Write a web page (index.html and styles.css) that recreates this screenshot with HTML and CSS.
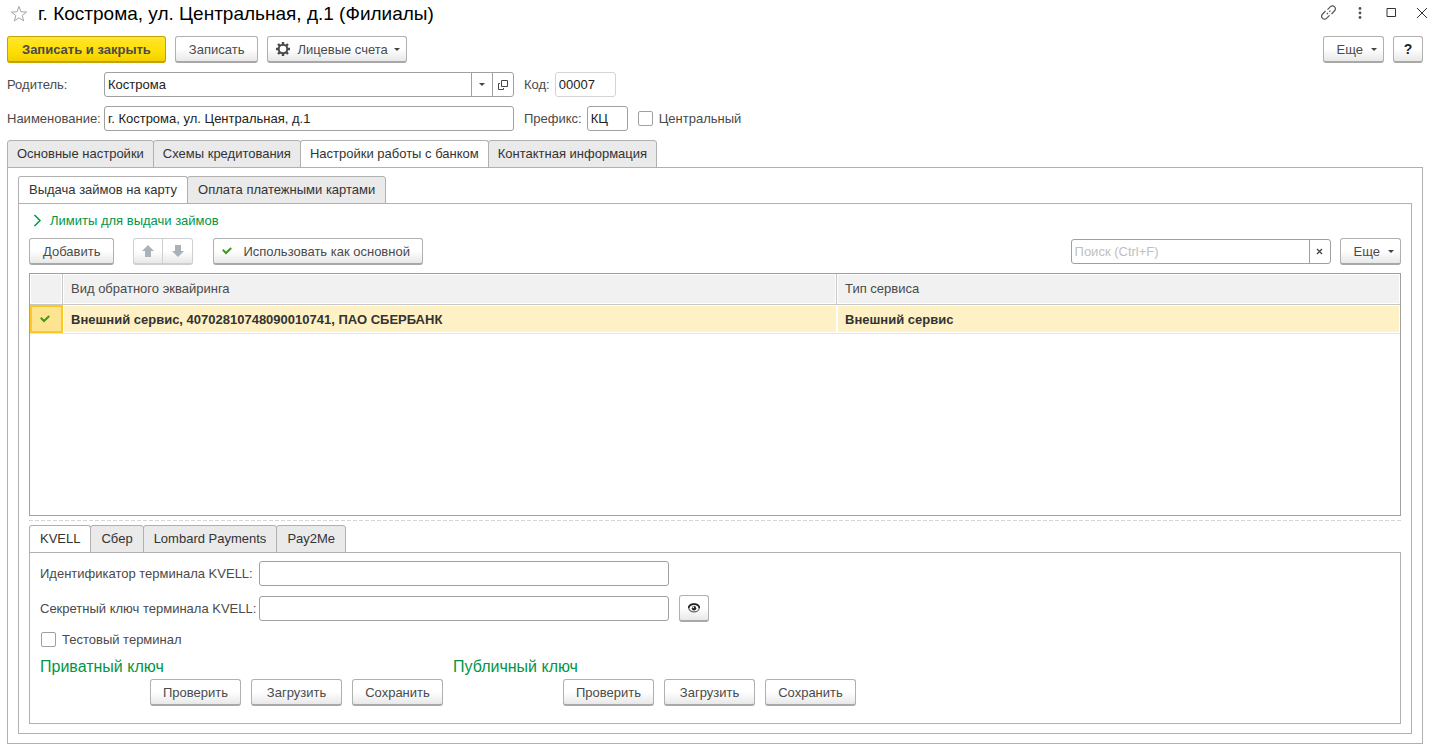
FILE: index.html
```html
<!DOCTYPE html>
<html lang="ru">
<head>
<meta charset="utf-8">
<title>г. Кострома, ул. Центральная, д.1 (Филиалы)</title>
<link rel="stylesheet" href="styles.css">
</head>
<body>
<header class="titlebar">
  <button class="icon-btn star" aria-label="В избранное"><svg width="18" height="18" viewBox="0 0 18 18"><path d="M9 1.500l2 5.300 5.600.2-4.400 3.500 1.500 5.400L9 12.800l-4.700 3.100 1.500-5.400L1.400 7l5.600-.2z" fill="none" stroke="#a5a5a5"/></svg></button>
  <h1 class="title">г. Кострома, ул. Центральная, д.1 (Филиалы)</h1>
  <div class="window-tools">
    <button class="icon-btn" aria-label="Ссылка"><svg width="16" height="16" viewBox="0 0 16 16" fill="none" stroke="#555" stroke-width="1.200"><path d="M6.500 4.700l3-3a2.700 2.700 0 0 1 3.900 0l.2.200a2.700 2.700 0 0 1 0 3.900L10.500 9M8.500 10.300l-3 3a2.700 2.700 0 0 1-3.900 0l-.2-.2a2.700 2.700 0 0 1 0-3.900L4.500 6M5.800 9.200l1.200-1.200M8.200 6.800l1.200-1.200"/></svg></button>
    <button class="icon-btn" aria-label="Меню"><svg width="16" height="16" viewBox="0 0 16 16" fill="#555"><circle cx="8" cy="3.500" r="1.400"/><circle cx="8" cy="8" r="1.400"/><circle cx="8" cy="12.500" r="1.400"/></svg></button>
    <button class="icon-btn" aria-label="Развернуть"><svg width="16" height="16" viewBox="0 0 16 16"><path d="M4 3.500h8.500v8H4z" fill="none" stroke="#333"/></svg></button>
    <button class="icon-btn" aria-label="Закрыть"><svg width="16" height="16" viewBox="0 0 16 16"><path d="M3 3l10 10M13 3L3 13" fill="none" stroke="#333"/></svg></button>
  </div>
</header>

<div class="toolbar">
  <button class="btn primary">Записать и закрыть</button>
  <button class="btn">Записать</button>
  <button class="btn menu with-icon"><svg width="16" height="16" viewBox="0 0 16 16"><circle cx="8" cy="8" r="4.300" fill="none" stroke="#4a4a4a" stroke-width="2"/><path d="M8 1v2.500M8 12.500V15M1 8h2.500M12.500 8H15M3 3l1.900 1.900M11.100 11.100L13 13M3 13l1.900-1.900M11.100 4.900L13 3" stroke="#4a4a4a" stroke-width="2.400"/></svg>Лицевые счета<span class="caret"></span></button>
  <span class="spacer"></span>
  <button class="btn menu">Еще<span class="caret"></span></button>
  <button class="btn help" aria-label="Справка">?</button>
</div>

<div class="field-row">
  <label class="main-label" for="parent">Родитель:</label>
  <div class="combo wide">
    <input id="parent" class="combo-input" type="text" value="Кострома">
    <button class="combo-btn" aria-label="Выбрать"><span class="caret"></span></button>
    <button class="combo-btn" aria-label="Открыть"><svg width="10" height="10" viewBox="0 0 10 10" fill="none" stroke="#444"><path d="M3.500.5h6v6h-6zM2 3.500H.5v6h5V8"/></svg></button>
  </div>
  <label for="code">Код:</label>
  <input id="code" class="input code" type="text" value="00007" readonly>
</div>
<div class="field-row">
  <label class="main-label" for="name">Наименование:</label>
  <input id="name" class="input wide" type="text" value="г. Кострома, ул. Центральная, д.1">
  <label for="prefix">Префикс:</label>
  <input id="prefix" class="input prefix" type="text" value="КЦ">
  <label class="check-label"><input class="check" type="checkbox">Центральный</label>
</div>

<nav class="tabs main-tabs">
  <button class="tab">Основные настройки</button>
  <button class="tab">Схемы кредитования</button>
  <button class="tab active">Настройки работы с банком</button>
  <button class="tab">Контактная информация</button>
</nav>
<main class="panel outer">
  <nav class="tabs">
    <button class="tab active">Выдача займов на карту</button>
    <button class="tab">Оплата платежными картами</button>
  </nav>
  <section class="panel inner">
    <a class="limits" href="#"><svg width="9" height="13" viewBox="0 0 9 13"><path d="M1.500 1l5.500 5.500L1.500 12" fill="none" stroke="#009646" stroke-width="1.500"/></svg>Лимиты для выдачи займов</a>
    <div class="commands">
      <button class="btn">Добавить</button>
      <div class="pair">
        <button class="btn" disabled aria-label="Вверх"><svg width="12" height="12" viewBox="0 0 12 12"><path d="M6 0l6 6H9v6H3V6H0z" fill="#a9b2b8"/></svg></button>
        <button class="btn" disabled aria-label="Вниз"><svg width="12" height="12" viewBox="0 0 12 12"><path d="M6 12l6-6H9V0H3v6H0z" fill="#a9b2b8"/></svg></button>
      </div>
      <button class="btn use"><svg width="10" height="8" viewBox="0 0 10 8"><path d="M.8 2.800l3.200 3.200L9.200 1" fill="none" stroke="#3d9a1c" stroke-width="2"/></svg>Использовать как основной</button>
      <span class="spacer"></span>
      <div class="combo search">
        <input class="combo-input" type="text" placeholder="Поиск (Ctrl+F)" aria-label="Поиск">
        <button class="combo-btn" aria-label="Очистить"><svg width="7" height="7" viewBox="0 0 7 7"><path d="M1 1l5 5M6 1L1 6" stroke="#444" stroke-width="1.200"/></svg></button>
      </div>
      <button class="btn menu">Еще<span class="caret"></span></button>
    </div>
    <div class="grid">
      <table class="list">
        <colgroup><col class="col-mark"><col class="col-kind"><col></colgroup>
        <thead><tr><th></th><th>Вид обратного эквайринга</th><th>Тип сервиса</th></tr></thead>
        <tbody><tr>
          <td class="mark"><svg width="10" height="8" viewBox="0 0 10 8"><path d="M.8 2.800l3.200 3.200L9.200 1" fill="none" stroke="#3d9a1c" stroke-width="2"/></svg></td>
          <td>Внешний сервис, 40702810748090010741, ПАО СБЕРБАНК</td><td>Внешний сервис</td>
        </tr></tbody>
      </table>
    </div>
    <div class="splitter"></div>
    <nav class="tabs">
      <button class="tab active">KVELL</button>
      <button class="tab">Сбер</button>
      <button class="tab">Lombard Payments</button>
      <button class="tab">Pay2Me</button>
    </nav>
    <div class="panel terminal">
      <div class="terminal-row">
        <label class="terminal-label" for="terminal-id">Идентификатор терминала KVELL:</label>
        <input id="terminal-id" class="input wide" type="text">
      </div>
      <div class="terminal-row">
        <label class="terminal-label" for="terminal-key">Секретный ключ терминала KVELL:</label>
        <input id="terminal-key" class="input wide" type="text">
        <button class="btn eye" aria-label="Показать"><svg width="12" height="10" viewBox="0 0 12 10"><ellipse cx="6" cy="5" rx="5.200" ry="3.800" fill="#fff" stroke="#666" stroke-width="1.200"/><path d="M.5 5C1.500-.2 10.500-.2 11.500 5" fill="none" stroke="#222" stroke-width="1.600"/><circle cx="6" cy="5.200" r="2.200" fill="#222"/><circle cx="5.300" cy="4.400" r=".8" fill="#fff"/></svg></button>
      </div>
      <label class="check-label test"><input class="check" type="checkbox">Тестовый терминал</label>
      <div class="keys">
        <section>
          <h2 class="key-title">Приватный ключ</h2>
          <div class="key-actions"><button class="btn">Проверить</button><button class="btn">Загрузить</button><button class="btn">Сохранить</button></div>
        </section>
        <section>
          <h2 class="key-title">Публичный ключ</h2>
          <div class="key-actions"><button class="btn">Проверить</button><button class="btn">Загрузить</button><button class="btn">Сохранить</button></div>
        </section>
      </div>
    </div>
  </section>
</main>
</body>
</html>
```
FILE: styles.css
```css
* { box-sizing: border-box; }
body {
  margin: 0;
  padding: 0 13px 7px 7px;
  min-height: 100vh;
  display: flex;
  flex-direction: column;
  background: #fff;
  color: #4a4a4a;
  font: 13px/15px "Liberation Sans", Arial, sans-serif;
}
button, input { font: inherit; color: inherit; }
svg { display: block; flex: none; }

.titlebar { display: flex; align-items: center; height: 28px; }
.title { margin: 0 0 0 10px; font-size: 19px; line-height: 22px; font-weight: 400; color: #000; }
.icon-btn { display: flex; padding: 0; border: 0; background: none; }
.star { margin-left: 3px; }
.window-tools { display: flex; gap: 15px; margin: -2px -7px 0 auto; }

.btn {
  display: flex;
  align-items: center;
  justify-content: center;
  height: 27px;
  padding: 0 13px;
  border: 1px solid #b0b0b0;
  border-bottom: 2px solid #a8a8a8;
  border-radius: 3px;
  background: linear-gradient(#fff 50%, #e8e8e8);
  white-space: nowrap;
}
.btn.primary { padding: 0 14px; border-color: #c4a300; background: linear-gradient(#ffe633, #ffdf00 60%, #f2d000); font-weight: 700; }
.btn.menu { gap: 8px; padding: 0 6px 0 13px; }
.btn.with-icon { gap: 6px; padding: 0 6px 0 7px; }
.btn.help { width: 30px; padding: 0; color: #222; font-weight: 700; font-size: 14px; }
.caret { border: 3px solid transparent; border-top-color: #444; border-bottom: 0; }
.spacer { flex: 1; }
.toolbar { display: flex; gap: 9px; margin: 8px 0 9px; }

.field-row { display: flex; align-items: center; gap: 10px; height: 25px; margin-bottom: 9px; }
.field-row label + .input { margin-left: -5px; }
.field-row .main-label { width: 97px; margin-right: -10px; }
.field-row .main-label + .input { margin-left: 0; }
.input, .combo { height: 25px; border: 1px solid #a0a0a0; border-radius: 3px; background: #fff; color: #222; }
.input { padding: 0 3px; }
.input.wide, .combo.wide { width: 410px; }
.input.code { width: 61px; border-color: #d4d4d4; }
.input.prefix { width: 41px; }
.combo { display: flex; }
.combo-input { flex: 1; min-width: 0; padding: 0 3px; border: 0; background: none; }
.combo-input::placeholder { color: #c0c0c0; opacity: 1; }
.combo-btn { display: flex; align-items: center; justify-content: center; width: 21px; padding: 0; border: 0; border-left: 1px solid #a0a0a0; background: none; }
.check-label { display: flex; align-items: center; gap: 6px; }
.check { appearance: none; width: 15px; height: 15px; margin: 0; border: 1px solid #a0a0a0; border-radius: 2px; background: #fff; }

.tabs { display: flex; margin-bottom: -1px; }
.tab { height: 28px; padding: 0 10px 2px; border: 1px solid #b0b0b0; border-radius: 3px 3px 0 0; background: #eaeaea; color: #333; white-space: nowrap; }
.main-tabs .tab { padding: 0 9px 2px; }
.tab + .tab { margin-left: -1px; }
.tab.active { border-bottom-color: #fff; background: #fff; }
.panel { border: 1px solid #b0b0b0; }
.outer { flex: 1; display: flex; flex-direction: column; padding: 8px 10px 9px; }
.inner { flex: 1; display: flex; flex-direction: column; padding: 9px 10px; }
.tabs, .terminal { flex: none; }

.limits { display: flex; align-items: center; gap: 8px; padding-left: 4px; color: #009646; text-decoration: none; }
.commands { display: flex; align-items: center; gap: 9px; margin: 10px 0 8px; }
.pair { display: flex; margin: 0 11px 0 10px; }
.pair .btn { width: 30px; padding: 0; border-color: #cfcfcf; }
.pair .btn:first-child { border-radius: 3px 0 0 3px; }
.pair .btn + .btn { margin-left: -1px; width: 31px; border-radius: 0 3px 3px 0; }
.btn.use { gap: 11px; padding: 0 12px 0 8px; }
.combo.search { width: 260px; }

.grid { flex: 1; min-height: 120px; border: 1px solid #a0a0a0; }
.list { width: 100%; table-layout: fixed; border-collapse: separate; border-spacing: 0; }
.col-mark { width: 33px; }
.col-kind { width: 56.500%; }
.list th, .list td { padding: 0 8px; text-align: left; box-shadow: inset 0 0 0 1px #fff; }
.list th { height: 31px; padding-bottom: 2px; border-bottom: 1px solid #c8c8c8; border-right: 1px solid #c8c8c8; background: #f1f1f1; font-weight: 400; }
.list th:last-child { border-right: 0; }
.list td { height: 29px; border-bottom: 1px solid #e4e4e4; background: #fdf1c5; color: #333; font-weight: 700; }
.list .mark { padding: 0 10px; background: #fee391; box-shadow: inset 0 0 0 2px #fbc926; }
.splitter { height: 9px; background: repeating-linear-gradient(90deg, #d4d4d4 0 4px, transparent 4px 6px) 0 4px / 100% 1px no-repeat; }

.terminal { padding: 8px 10px 17px; }
.terminal-row { display: flex; align-items: center; height: 25px; margin-bottom: 10px; }
.terminal-label { width: 219px; white-space: nowrap; }
.eye { width: 30px; margin-left: 10px; padding: 0; }
.test { width: max-content; margin: 11px 0 10px 1px; }
.keys { display: flex; gap: 10px; }
.key-title { margin: 0 0 2px; color: #009646; font-size: 16px; line-height: 20px; font-weight: 400; }
.key-actions { display: flex; gap: 10px; padding-left: 110px; }
.key-actions .btn { width: 91px; padding: 0; }
```
